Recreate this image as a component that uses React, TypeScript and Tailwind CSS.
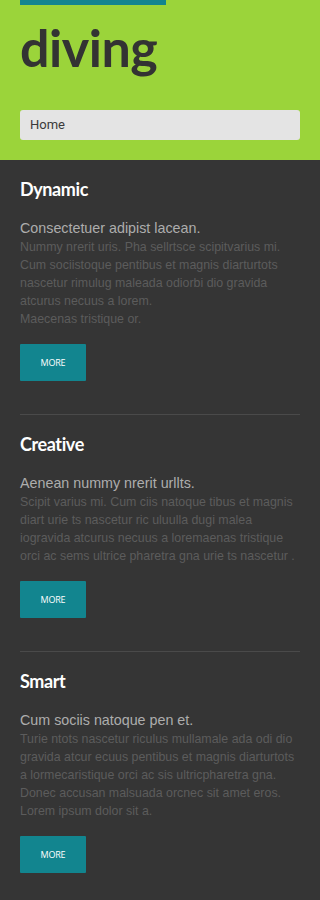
const sections = [
  {
    title: 'Dynamic',
    lead: 'Consectetuer adipist lacean.',
    body: [
      'Nummy nrerit uris. Pha sellrtsce scipitvarius mi. Cum sociistoque pentibus et magnis diarturtots nascetur rimulug maleada odiorbi dio gravida atcurus necuus a lorem.',
      'Maecenas tristique or.',
    ],
  },
  {
    title: 'Creative',
    lead: 'Aenean nummy nrerit urllts.',
    body: [
      'Scipit varius mi. Cum ciis natoque tibus et magnis diart urie ts nascetur ric uluulla dugi malea iogravida atcurus necuus a loremaenas tristique orci ac sems ultrice pharetra gna urie ts nascetur .',
    ],
  },
  {
    title: 'Smart',
    lead: 'Cum sociis natoque pen et.',
    body: [
      'Turie ntots nascetur riculus mullamale ada odi dio gravida atcur ecuus pentibus et magnis diarturtots a lormecaristique orci ac sis ultricpharetra gna. Donec accusan malsuada orcnec sit amet eros. Lorem ipsum dolor sit a.',
    ],
  },
];

function Section({ s, last }: { s: (typeof sections)[number]; last: boolean }) {
  return (
    <div className={`pt-[17px] ${last ? 'pb-[27px]' : 'pb-[33px] border-b border-[#4a4a4a]'}`}>
      <h2 className="font-['Lato',sans-serif] font-bold text-[18px] leading-[24px] tracking-[-0.4px] text-white">
        {s.title}
      </h2>
      <p className="mt-[17px] font-['Liberation_Sans',Arial,sans-serif] text-[14.3px] leading-[20px] text-[#adadad]">
        {s.lead}
      </p>
      <div className="font-['Liberation_Sans',Arial,sans-serif] text-[12.4px] leading-[18px] text-[#5c5c5c]">
        {s.body.map((t, i) => (
          <p key={i}>{t}</p>
        ))}
      </div>
      <a
        href="#"
        className="mt-[16px] flex items-center justify-center w-[66px] h-[37px] bg-[#12858f] rounded-[1px] text-white font-['Open_Sans',sans-serif] text-[9px] tracking-[-0.2px]"
      >
        MORE
      </a>
    </div>
  );
}

export default function App() {
  return (
    <div className="w-[320px] min-h-[900px] bg-[#353535]">
      {/* Header */}
      <div className="bg-[#9bd43a] px-5 pb-[20px]">
        <div className="w-[146px] h-[5px] bg-[#12858f]" />
        <h1 className="mt-[12px] font-['Lato',sans-serif] font-bold text-[52px] leading-[60px] tracking-[-0.5px] text-[#333333]">
          diving
        </h1>
        <div className="mt-[33px] h-[30px] rounded-[3px] bg-[#e4e4e4] flex items-center px-[10px] font-['Roboto',sans-serif] text-[13px] text-[#3a3a3a]">
          Home
        </div>
      </div>

      {/* Content */}
      <div className="px-5">
        {sections.map((s, i) => (
          <Section key={s.title} s={s} last={i === sections.length - 1} />
        ))}
      </div>
    </div>
  );
}
